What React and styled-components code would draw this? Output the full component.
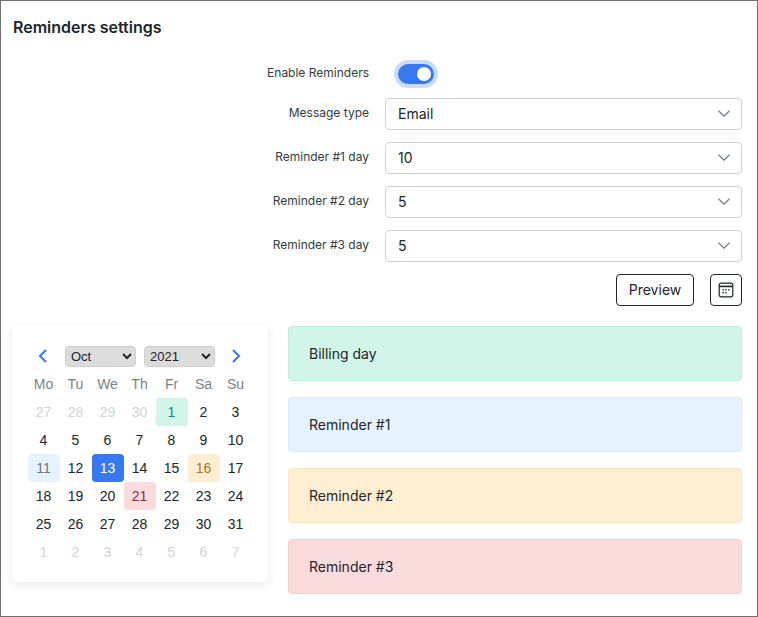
import React from 'react'
import styled, { createGlobalStyle } from 'styled-components'

const Global = createGlobalStyle`
    * { box-sizing: border-box; }
    body {
        margin: 0;
        background: #fff;
        font-family: Inter, "Liberation Sans", sans-serif;
        color: #212529;
    }
`;

const Frame = styled.div`
    width: 758px;
    height: 617px;
    border: 1px solid #6f6f6f;
    padding: 16px 15px 0 11px;
`;

const Title = styled.h1`
    margin: 0 0 0 1px;
    font-size: 16px;
    line-height: 20px;
    font-weight: 600;
    color: #212529;
`;

const Form = styled.div`
    display: flex;
    flex-direction: column;
    gap: 12px;
    margin-top: 25px;
`;

const Row = styled.div`
    display: grid;
    grid-template-columns: 357px 357px;
    column-gap: 16px;
    align-items: center;
    height: ${p => p.$small ? '24px' : '32px'};
`;

const Label = styled.label`
    text-align: right;
    font-size: 12px;
    line-height: 16px;
    color: #343a40;
    position: relative;
    top: -1px;
`;

const Toggle = styled.div`
    width: 36px;
    height: 20px;
    margin-left: 13px;
    border-radius: 10px;
    background: #3578f0;
    box-shadow: 0 0 0 4px #c9dcfb;
    display: flex;
    align-items: center;
    justify-content: flex-end;
    padding-right: 3px;
`;

const Knob = styled.span`
    width: 14px;
    height: 14px;
    border-radius: 50%;
    background: #fff;
`;

const Select = styled.div`
    height: 32px;
    border: 1px solid #ced4da;
    border-radius: 4px;
    padding: 0 11px 2px 12px;
    display: flex;
    align-items: center;
    justify-content: space-between;
    font-size: 14px;
    color: #212529;
`;

const Actions = styled.div`
    display: flex;
    justify-content: flex-end;
    gap: 16px;
`;

const OutlineButton = styled.button`
    height: 32px;
    width: ${p => p.$icon ? '32px' : '78px'};
    padding: 0 0 ${p => p.$icon ? '0' : '2px'};
    border: 1px solid #212529;
    border-radius: 4px;
    background: #fff;
    font-family: inherit;
    font-size: 14px;
    color: #212529;
    display: flex;
    align-items: center;
    justify-content: center;
`;

const Lower = styled.div`
    display: flex;
    gap: 20px;
    margin-top: 20px;
    align-items: flex-start;
`;

const Card = styled.div`
    width: 256px;
    height: 256px;
    border-radius: 4px;
    background: #fff;
    box-shadow: 0 2px 8px rgba(33, 37, 41, 0.1);
    padding: 20px 16px 0;
    font-family: "Liberation Sans", Arial, sans-serif;
`;

const CalHead = styled.div`
    display: grid;
    grid-template-columns: 30px 71px 71px 30px;
    column-gap: 8px;
    margin-left: -1px;
    align-items: start;
    height: 21px;
`;

const Arrow = styled.span`
    display: flex;
    height: 20px;
    align-items: center;
    justify-content: ${p => p.$right ? 'flex-start' : 'center'};
    padding-left: ${p => p.$right ? '8px' : '1px'};
`;

const NativeSelect = styled.select`
    width: 71px;
    height: 21px;
    font-family: "Liberation Sans", Arial, sans-serif;
    font-size: 13px;
    color: #212529;
    background-color: #dcdcdc;
    border: 1px solid #cfcfcf;
    border-radius: 4px;
    padding: 0 0 0 1px;
`;

const Grid = styled.div`
    display: grid;
    grid-template-columns: repeat(7, 32px);
    grid-auto-rows: 28px;
    margin-top: 3px;
`;

const DayName = styled.div`
    display: flex;
    align-items: center;
    justify-content: center;
    font-size: 14px;
    color: #7c8288;
    padding-right: 1px;
`;

const tones = {
    muted: ['transparent', '#ced4da'],
    plain: ['transparent', '#212529'],
    green: ['#d1f5e8', '#0f8a80'],
    blue: ['#e5f2ff', '#6c757d'],
    active: ['#3578f0', '#ffffff'],
    orange: ['#ffefd2', '#a8741a'],
    red: ['#fbdcdd', '#8f2f3c'],
};

const Day = styled.div`
    display: flex;
    align-items: center;
    justify-content: center;
    font-size: 14px;
    padding-right: 1px;
    border-radius: 4px;
    background: ${p => tones[p.$tone][0]};
    color: ${p => tones[p.$tone][1]};
`;

const Legend = styled.div`
    flex: 1;
    display: flex;
    flex-direction: column;
    gap: 16px;
`;

const Alert = styled.div`
    height: 55px;
    padding: 0 20px;
    display: flex;
    align-items: center;
    font-size: 14px;
    color: #212529;
    border-radius: 4px;
    background: ${p => p.$bg};
    border: 1px solid ${p => p.$line};
`;

const ChevronSvg = styled.svg`
    margin-top: 1px;
`;

const Chevron = () => (
    <ChevronSvg width="12" height="7" viewBox="0 0 12 7" fill="none" stroke="#6c7a8c" strokeWidth="1.2">
        <path d="M.5.8L6 6.2 11.5.8" />
    </ChevronSvg>
);

const CalendarIcon = () => (
    <svg width="16" height="16" viewBox="0 0 16 16" fill="none">
        <rect x="1.2" y="1.2" width="13.6" height="13.6" rx="2" stroke="#212529" strokeWidth="1.2" />
        <path d="M1 4.4h14" stroke="#212529" strokeWidth="1.6" />
        <path d="M4.4 7.8h1.3M7.3 7.8h1.3M10.2 7.8h1.3M4.4 10.8h1.3M7.3 10.8h1.3" stroke="#212529" strokeWidth="1.4" />
    </svg>
);

const ArrowIcon = ({ flip }) => (
    <svg width="10" height="14" viewBox="0 0 10 14" fill="none" stroke="#3578f0" strokeWidth="2">
        <path d={flip ? 'M2 1l6 6-6 6' : 'M8 1L2 7l6 6'} />
    </svg>
);

const selects = [
    ['Message type', 'Email'],
    ['Reminder #1 day', '10'],
    ['Reminder #2 day', '5'],
    ['Reminder #3 day', '5'],
];

const dayNames = ['Mo', 'Tu', 'We', 'Th', 'Fr', 'Sa', 'Su'];

const toneFor = { 1: 'green', 11: 'blue', 13: 'active', 16: 'orange', 21: 'red' };

const days = [
    ...[27, 28, 29, 30].map(d => [d, 'muted']),
    ...Array.from({ length: 31 }, (_, i) => [i + 1, toneFor[i + 1] || 'plain']),
    ...[1, 2, 3, 4, 5, 6, 7].map(d => [d, 'muted']),
];

const alerts = [
    ['Billing day', '#d1f5e8', '#bdeedd'],
    ['Reminder #1', '#e5f2ff', '#d9eafb'],
    ['Reminder #2', '#ffefd2', '#fbe5bf'],
    ['Reminder #3', '#fbdcdd', '#f7ced1'],
];

export default function App() {
    return (
        <Frame>
            <Global />
            <Title>Reminders settings</Title>
            <Form>
                <Row $small>
                    <Label>Enable Reminders</Label>
                    <Toggle><Knob /></Toggle>
                </Row>
                {selects.map(([label, value]) => (
                    <Row key={label}>
                        <Label>{label}</Label>
                        <Select>{value}<Chevron /></Select>
                    </Row>
                ))}
                <Actions>
                    <OutlineButton>Preview</OutlineButton>
                    <OutlineButton $icon><CalendarIcon /></OutlineButton>
                </Actions>
            </Form>
            <Lower>
                <Card>
                    <CalHead>
                        <Arrow><ArrowIcon /></Arrow>
                        <NativeSelect defaultValue="Oct"><option>Oct</option></NativeSelect>
                        <NativeSelect defaultValue="2021"><option>2021</option></NativeSelect>
                        <Arrow $right><ArrowIcon flip /></Arrow>
                    </CalHead>
                    <Grid>
                        {dayNames.map(n => <DayName key={n}>{n}</DayName>)}
                        {days.map(([d, tone], i) => <Day key={i} $tone={tone}>{d}</Day>)}
                    </Grid>
                </Card>
                <Legend>
                    {alerts.map(([text, bg, line]) => (
                        <Alert key={text} $bg={bg} $line={line}>{text}</Alert>
                    ))}
                </Legend>
            </Lower>
        </Frame>
    );
}
